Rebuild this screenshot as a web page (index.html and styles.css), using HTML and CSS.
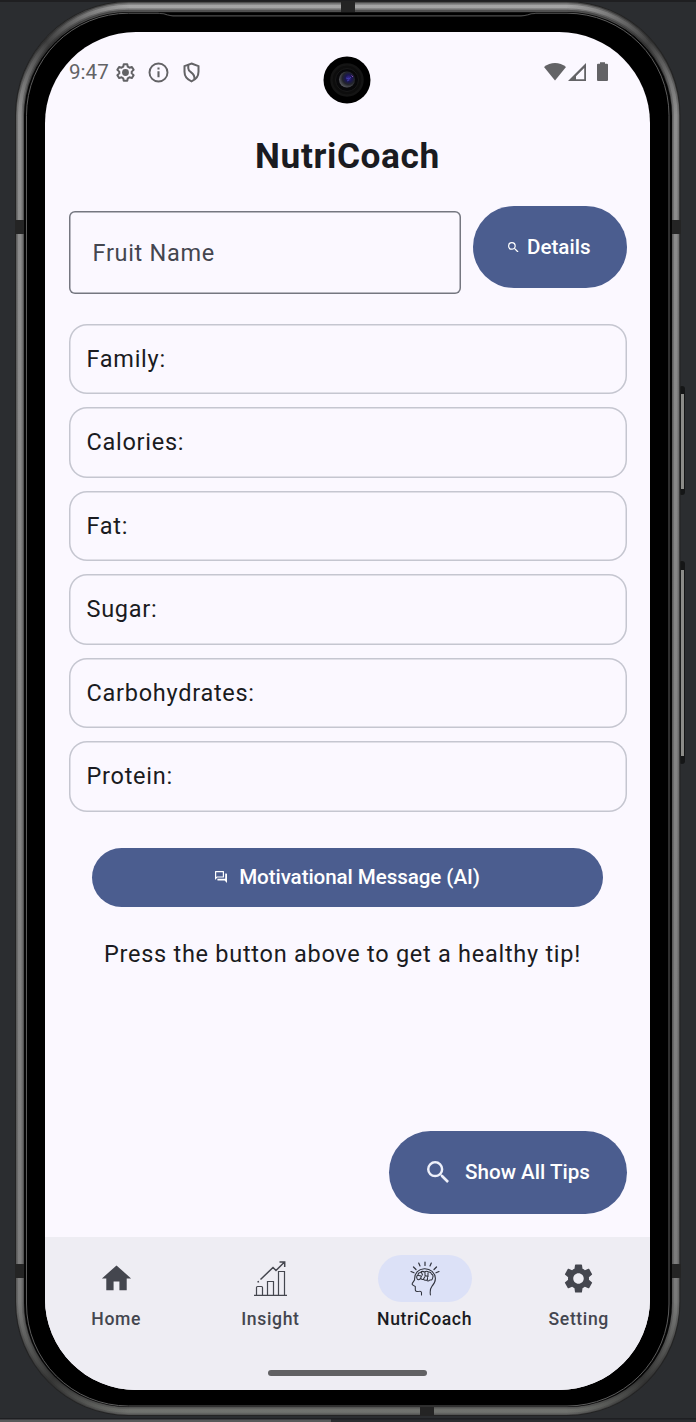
FILE: index.html
```html
<!DOCTYPE html>
<html lang="en">
<head>
<meta charset="utf-8">
<title>NutriCoach</title>
<link rel="stylesheet" href="styles.css">
</head>
<body>
<div class="desk">
  <svg class="device" viewBox="0 0 696 1422" aria-hidden="true">
    <defs>
      <linearGradient id="band" x1="0" y1="0" x2="0" y2="1416" gradientUnits="userSpaceOnUse">
        <stop offset="0" stop-color="#a6a6a6"/><stop offset=".08" stop-color="#8e8e8e"/>
        <stop offset=".9" stop-color="#7c7c7c"/><stop offset="1" stop-color="#70726e"/>
      </linearGradient>
      <linearGradient id="shadeTL" x1="20" y1="115" x2="130" y2="6" gradientUnits="userSpaceOnUse"><stop offset="0" stop-color="#222" stop-opacity="0"/><stop offset=".45" stop-color="#222" stop-opacity=".75"/><stop offset="1" stop-color="#222" stop-opacity="0"/></linearGradient>
      <linearGradient id="shadeTR" x1="676" y1="115" x2="566" y2="6" gradientUnits="userSpaceOnUse"><stop offset="0" stop-color="#222" stop-opacity="0"/><stop offset=".45" stop-color="#222" stop-opacity=".75"/><stop offset="1" stop-color="#222" stop-opacity="0"/></linearGradient>
      <linearGradient id="shadeBL" x1="20" y1="1302" x2="130" y2="1411" gradientUnits="userSpaceOnUse"><stop offset="0" stop-color="#222" stop-opacity="0"/><stop offset=".5" stop-color="#222" stop-opacity=".75"/><stop offset="1" stop-color="#222" stop-opacity="0"/></linearGradient>
      <linearGradient id="shadeBR" x1="676" y1="1302" x2="566" y2="1411" gradientUnits="userSpaceOnUse"><stop offset="0" stop-color="#222" stop-opacity="0"/><stop offset=".5" stop-color="#222" stop-opacity=".75"/><stop offset="1" stop-color="#222" stop-opacity="0"/></linearGradient>
      <radialGradient id="lens" cx=".6" cy=".42" r=".6">
        <stop offset="0" stop-color="#3d2a9c"/><stop offset=".35" stop-color="#1a1650"/><stop offset=".65" stop-color="#22242a"/><stop offset="1" stop-color="#55565c"/>
      </radialGradient>
    </defs>
    <rect width="696" height="2" fill="#1f1f21"/>
    <!-- side keys -->
    <rect x="679" y="386" width="6" height="109" rx="3" fill="#151617"/><rect x="681" y="394" width="3" height="95" fill="#8c8c89"/>
    <rect x="679" y="561" width="6" height="203" rx="3" fill="#151617"/><rect x="681" y="570" width="3" height="186" fill="#8c8c89"/>
    <!-- metal band -->
    <rect x="15" y="1" width="665.5" height="1415" rx="114" fill="#232323"/>
    <rect x="16" y="2" width="663.5" height="1413" rx="113" fill="#505050"/>
    <rect x="19.800" y="6.500" width="656" height="1404.500" rx="109" fill="none" stroke="url(#band)" stroke-opacity=".55" stroke-width="6.500"/>
    <rect x="19.800" y="6.500" width="656" height="1404.500" rx="109" fill="none" stroke="url(#band)" stroke-width="3.500"/>
    <g fill="none" stroke-width="9">
      <path d="M20 115.500A109 109 0 0 1 129 6.500" stroke="url(#shadeTL)"/>
      <path d="M567 6.500A109 109 0 0 1 676 115.500" stroke="url(#shadeTR)"/>
      <path d="M20 1302A109 109 0 0 0 129 1411" stroke="url(#shadeBL)"/>
      <path d="M567 1411A109 109 0 0 0 676 1302" stroke="url(#shadeBR)"/>
    </g>
    <g fill="#242424">
      <rect x="15" y="220" width="9" height="14"/><rect x="672" y="220" width="9" height="14"/>
      <rect x="15" y="1264" width="9" height="14"/><rect x="672" y="1264" width="9" height="14"/>
      <rect x="341" y="1" width="14" height="11"/><rect x="420" y="1407" width="14" height="9"/>
    </g>
    <!-- glass and bezel -->
    <rect x="24" y="12" width="648" height="1395" rx="104" fill="#050505"/>
    <rect x="26.500" y="13.200" width="642.500" height="1392.800" rx="102" fill="#000" stroke="#5c5c5c" stroke-width="1"/>
    <path d="M158 12.500h378l-9 3q-3 .8-6 .8H173q-4 0-7-.8z" fill="#000"/>
    <path d="M160 13.500q4 0 7 1.300 3 1 6 1H521q4 0 7-1 3-1.300 7-1.300" fill="none" stroke="#4c4c4c" stroke-width="1.200"/>
    <!-- desktop edge below the device -->
    <rect y="1418" width="696" height="1.500" fill="#1e1f22"/>
    <rect y="1419.500" width="331" height="2.500" fill="#58595a"/>
  </svg>

  <main class="screen">
    <header class="status">
      <span class="clock">9:47</span>
      <svg class="st" viewBox="0 0 24 24"><path fill="none" stroke="#636366" stroke-width="2.300" stroke-linejoin="round" d="M10 2.500h4l.6 2.900 1.900 1.100 2.800-.9 2 3.400-2.200 2v2l2.200 2-2 3.400-2.800-.9-1.900 1.100-.6 2.900h-4l-.6-2.900-1.900-1.100-2.800.9-2-3.400 2.200-2v-2l-2.200-2 2-3.400 2.800.9 1.900-1.100z"/><circle cx="12" cy="12" r="3.900" fill="#636366"/></svg>
      <svg class="st info" viewBox="0 0 24 24"><circle cx="12" cy="12" r="10.300" fill="none" stroke="#636366" stroke-width="2.200"/><path d="M12 10.500v7M12 6.300v2.200" stroke="#636366" stroke-width="2.400"/></svg>
      <svg class="st shield" viewBox="0 0 24 24"><path d="M12 1.700l8 3v6.500c0 5-3 8.800-8 11-5-2.200-8-6-8-11V4.700z" fill="none" stroke="#636366" stroke-width="2.300"/><path d="M8.300 3v4c0 5.500 8.300 4.500 7 12.500" fill="none" stroke="#636366" stroke-width="2.300"/></svg>
      <span class="grow"></span>
      <svg class="radio" viewBox="0 0 66 22"><g fill="#636366"><path d="M0 6C6.500.5 15.500.5 22 6L11 19.500z"/><path fill-rule="evenodd" d="M24 20L42 2v18zM32 18.200h8.200V7l-8.200 8.200z"/><path d="M56 1.200h5v1.600h2q1 0 1 1V19q0 1-1 1h-9q-1 0-1-1V3.800q0-1 1-1h2z"/></g></svg>
    </header>
    <svg class="camera" viewBox="0 0 48 48"><circle cx="24" cy="24" r="23.500"/><circle cx="24" cy="24" r="15.500" fill="#0d0d0d" stroke="#141414" stroke-width="2.500"/><circle cx="24" cy="24" r="11.500" fill="#08080a" stroke="#191919"/><circle cx="24" cy="23.500" r="8" fill="url(#lens)"/><path d="M23 22l3 1 2-2M24 25l2-1" stroke="#4242b0" fill="none" stroke-width=".8"/><path d="M28.500 19.500l1.500 1.500" stroke="#8a4bb0"/></svg>

    <h1 class="title">NutriCoach</h1>

    <div class="content">
      <div class="search">
        <div class="field">Fruit Name</div>
        <button class="btn details"><svg class="mag-s" viewBox="3 3 17.500 17.500"><path fill="#fff" d="M15.500 14h-.79l-.28-.27A6.470 6.470 0 0 0 16 9.500 6.500 6.500 0 1 0 9.500 16c1.610 0 3.090-.59 4.230-1.570l.27.280v.79l5 4.990L20.490 19l-4.990-5zm-6 0C7.010 14 5 11.990 5 9.500S7.010 5 9.500 5 14 7.010 14 9.500 11.990 14 9.500 14z"/></svg>Details</button>
      </div>
      <div class="cards">
        <div class="card">Family:</div>
        <div class="card">Calories:</div>
        <div class="card">Fat:</div>
        <div class="card">Sugar:</div>
        <div class="card">Carbohydrates:</div>
        <div class="card">Protein:</div>
      </div>
      <button class="btn message"><svg class="forum" viewBox="2 2 20 20"><path fill="#fff" d="M15 4v7H5.170L4 12.170V4h11m1-2H3c-.55 0-1 .45-1 1v14l4-4h10c.55 0 1-.45 1-1V3c0-.55-.45-1-1-1zm5 4h-2v9H6v2c0 .55.45 1 1 1h11l4 4V7c0-.55-.45-1-1-1z"/></svg>Motivational Message (AI)</button>
      <p class="tip">Press the button above to get a healthy tip!</p>
      <button class="btn tips"><svg class="mag-l" viewBox="3 3 17.500 17.500"><path fill="#eef0fa" d="M15.500 14h-.79l-.28-.27A6.470 6.470 0 0 0 16 9.500 6.500 6.500 0 1 0 9.500 16c1.610 0 3.090-.59 4.230-1.570l.27.280v.79l5 4.990L20.490 19l-4.990-5zm-6 0C7.010 14 5 11.990 5 9.500S7.010 5 9.500 5 14 7.010 14 9.500 11.990 14 9.500 14z"/></svg>Show All Tips</button>
    </div>

    <nav class="nav">
      <div class="tabs">
        <div class="tab"><span class="pill"><svg class="ic" viewBox="0 0 24 24"><path fill="#44464e" d="M10 20v-6h4v6h5v-8h3L12 3 2 12h3v8z"/></svg></span>Home</div>
        <div class="tab"><span class="pill"><svg class="ic" viewBox="0 0 35 35"><g fill="none" stroke="#44464e" stroke-width="1.200"><path d="M1 34.300h33M3.500 34.500v-8q0-1 1-1h4q1 0 1 1v8M14.500 34.500V20.500h6v14M25.500 34.500v-24h6v24"/><path stroke-width="1.500" d="M7.500 18.500L20 6.500l3 3 8.500-8.500M26.500.9h5.200V6M4.500 21l1.500-.5"/></g></svg></span>Insight</div>
        <div class="tab active"><span class="pill on"><svg class="ic" viewBox="0 0 35 35"><g fill="none" stroke="#30323c" stroke-width="1.050" stroke-linecap="round" stroke-linejoin="round"><path d="M14.500 34v-2.500q-.3-1.500-2-1.300l-2.500.2q-1.800 0-1.700-2v-3q-3.800-1.600-3-3l2.300-3.500q-.3-5 2.500-8c3.500-3.800 10.500-4.500 15-.5 4.500 4.500 4 10-.2 15-2 2.500-2 5-1.500 8.500"/><path d="M10 17.500q-1-2.500 1-3.500 0-2.500 2.500-2.500 1.500-2 4-.5 2-1.500 4 0 2.500-.3 3 2 2.200 1 1.300 3.200-.2 3.300-3 2.800-1.800 2-3.300 0-2 .8-3-.8-1.500.8-2.500-.7Q10.500 20 10 17.500zM14.500 11.500l1 2.500M18 11v3.500l3 1v-3.500M11.500 14.500l3 .5-1 2.500M16.500 18l1.500-2.500M20.500 18.500v-2"/><path stroke-width="1.200" d="M18 1v3.500M11.700 2l1.300 3M6.500 6L9 8.500M4 10.500l3 1.300M24.300 2L23 5M29.500 6L27 8.500M32 10.500l-3 1.300"/></g></svg></span>NutriCoach</div>
        <div class="tab"><span class="pill"><svg class="ic" viewBox="0 0 24 24"><path fill="#44464e" d="M19.140 12.940c.04-.3.060-.61.060-.94 0-.32-.02-.64-.07-.94l2.030-1.580c.18-.14.230-.41.120-.61l-1.920-3.320c-.12-.22-.37-.29-.59-.22l-2.390.96c-.5-.38-1.030-.7-1.620-.94l-.36-2.540c-.04-.24-.24-.41-.48-.41h-3.840c-.24 0-.43.170-.47.410l-.36 2.540c-.59.240-1.130.570-1.620.940l-2.390-.96c-.22-.08-.47 0-.59.220L2.740 8.870c-.12.210-.08.470.120.610l2.030 1.580c-.05.300-.09.630-.09.940s.02.640.07.940l-2.030 1.580c-.18.140-.23.410-.12.610l1.920 3.320c.12.220.37.290.59.220l2.390-.96c.5.380 1.030.7 1.620.940l.36 2.540c.05.240.24.410.48.410h3.840c.24 0 .44-.17.470-.41l.36-2.540c.59-.24 1.130-.56 1.620-.94l2.390.96c.22.080.47 0 .59-.22l1.920-3.320c.12-.22.070-.47-.12-.61zM12 15.600c-1.980 0-3.600-1.620-3.600-3.600s1.620-3.600 3.600-3.600 3.600 1.620 3.600 3.600-1.620 3.600-3.600 3.600z"/></svg></span>Setting</div>
      </div>
      <div class="gesture"></div>
    </nav>
  </main>
</div>
</body>
</html>
```

FILE: styles.css
```css
* { box-sizing: border-box; }
body { margin: 0; background: #2b2d30; font-family: Roboto, "Liberation Sans", sans-serif; }
.desk { position: relative; width: 696px; height: 1422px; padding: 32px 46px 32px 45px; overflow: hidden; }
.device { position: absolute; inset: 0; width: 696px; height: 1422px; }
.screen { position: relative; width: 605px; height: 1358px; border-radius: 91px; background: #fbf8ff; overflow: hidden; display: flex; flex-direction: column; color: #1a1b21; }
.status { height: 80px; padding: 0 40px 0 24px; display: flex; align-items: center; }
.clock { font-size: 20.600px; color: #636366; width: 46px; }
.st { width: 21px; height: 21px; }
.info { margin-left: 12px; }
.shield { margin-left: 11.500px; }
.grow { flex: 1; }
.radio { width: 66px; height: 22px; }
.camera { position: absolute; left: 278px; top: 24px; width: 48px; height: 48px; }
.title { margin: 0; height: 94px; padding-top: 1px; line-height: 87px; text-align: center; font-size: 35.300px; font-weight: 700; letter-spacing: .6px; }
.content { flex: 1; padding: 0 23.500px; display: flex; flex-direction: column; }
.search { display: flex; gap: 11.500px; height: 117.500px; align-items: flex-start; }
.field { width: 392.500px; height: 82.500px; margin-top: 5px; box-shadow: inset 0 0 0 1.500px #757780; border-radius: 6px; padding-left: 24px; line-height: 84px; font-size: 23.500px; letter-spacing: .7px; color: #44464f; }
.btn { border: 0; border-radius: 42px; background: #4b5d8f; color: #fff; font: 500 20.600px Roboto, sans-serif; letter-spacing: 0; display: flex; align-items: center; justify-content: center; padding: 0; }
.details { width: 154px; height: 82px; gap: 8px; }
.mag-s { width: 10.500px; height: 10.500px; }
.cards { display: grid; gap: 13px; }
.card { height: 70.500px; box-shadow: inset 0 0 0 1.500px #c5c6d0; border-radius: 18px; padding-left: 18px; line-height: 71px; font-size: 23.500px; letter-spacing: .73px; }
.message { height: 58.500px; margin: 36.500px 23.500px 0; gap: 12px; letter-spacing: -.08px; }
.forum { width: 12px; height: 12px; }
.tip { margin: 30px 10px 0 0; text-align: center; font-size: 23.500px; line-height: 34px; letter-spacing: .73px; }
.tips { width: 238px; height: 82.500px; margin: auto 0 23.500px auto; padding-left: 2px; gap: 16px; }
.mag-l { width: 22px; height: 22px; }
.nav { height: 153px; background: #eeedf3; display: flex; flex-direction: column; align-items: center; }
.tabs { width: 605px; height: 133px; padding-top: 17.500px; display: grid; grid-template-columns: repeat(4, 1fr); gap: 11.760px; }
.tab { display: flex; flex-direction: column; align-items: center; gap: 6px; font-size: 17.600px; line-height: 23.500px; font-weight: 500; letter-spacing: .62px; color: #44464f; }
.active { color: #1a1b21; }
.pill { width: 94px; height: 47px; border-radius: 24px; display: flex; align-items: center; justify-content: center; }
.on { background: #dce1f7; }
.ic { width: 35px; height: 35px; }
.gesture { width: 159px; height: 5.500px; border-radius: 3px; background: #616163; }
```
